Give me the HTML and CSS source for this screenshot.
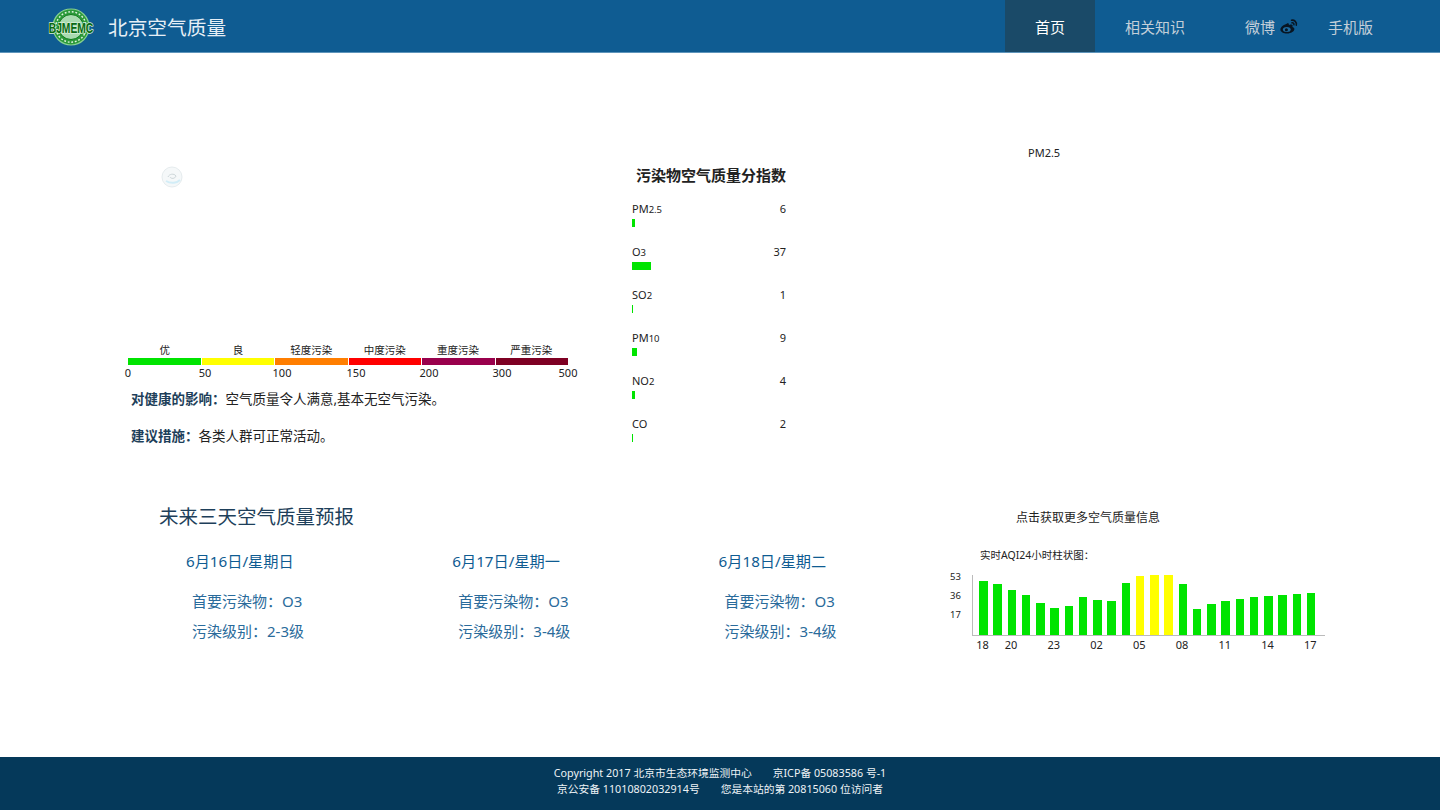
FILE: index.html
```html
<!DOCTYPE html>
<html lang="zh-CN">
<head>
<meta charset="utf-8">
<title>北京空气质量</title>
<link rel="stylesheet" href="styles.css">
</head>
<body>
<header class="topbar">
  <div class="brand">
    <svg class="logo" width="48" height="42" viewBox="0 0 48 42">
      <circle cx="24" cy="21" r="18" fill="#2c9a3a" stroke="#86d090" stroke-width="1.2"/>
      <circle cx="24" cy="21" r="15.200" fill="none" stroke="#e4f4e4" stroke-width="1.400" stroke-dasharray="1.800 1.800"/>
      <circle cx="24" cy="21" r="12.500" fill="#a9dab0" stroke="#0d7a1a" stroke-width="1"/>
      <text class="logo-text" transform="translate(24 27) scale(1 1.450)" text-anchor="middle">BJMEMC</text>
    </svg>
    <span class="brand-name">北京空气质量</span>
  </div>
  <nav class="nav">
    <a class="nav-item nav-active">首页</a>
    <a class="nav-item nav-wide">相关知识</a>
    <a class="nav-item nav-weibo">微博
      <svg class="weibo" width="18" height="15" viewBox="0 0 18 15">
        <path d="M6.800 4.800C3.800 5.800.4 8 .4 10.600c0 2.500 3.200 4 6.600 4 4.200 0 7.400-2.300 7.400-4.500 0-1.300-1.100-1.900-2-2.200.5-1.100.4-2.300-1.300-2.400-1 0-2.200.5-2.200.5.200-1.300-.6-2.100-2.100-1.400z" fill="#081522"/>
        <ellipse cx="6.800" cy="10.600" rx="3.900" ry="2.500" fill="#1d6a9f"/>
        <circle cx="6.400" cy="10.700" r="1.500" fill="#081522"/>
        <path d="M11.500 1.200c3-.5 5.500 2 4.800 5M12 3.800c1.300-.2 2.200.8 1.900 2" fill="none" stroke="#081522" stroke-width="1.500" stroke-linecap="round"/>
      </svg>
    </a>
    <a class="nav-item nav-mobile">手机版</a>
  </nav>
</header>

<main class="content">
  <section class="upper">
    <div class="aqi-col">
      <svg class="weather" width="24" height="22" viewBox="0 0 24 22">
        <circle cx="12" cy="11" r="10" fill="#f5f8f9" stroke="#e6ecee"/>
        <path d="M6 15c5 3 11 2 14-1" fill="none" stroke="#d2edf7" stroke-width="2"/>
        <path d="M8 11c1-3 6-4 8-1-1 3-5 3-6 1" fill="none" stroke="#cdd6d9" stroke-width="1"/>
      </svg>
      <div class="scale">
        <div class="scale-names">
          <span>优</span><span>良</span><span>轻度污染</span><span>中度污染</span><span>重度污染</span><span>严重污染</span>
        </div>
        <div class="scale-bar">
          <i class="lv1"></i><i class="lv2"></i><i class="lv3"></i><i class="lv4"></i><i class="lv5"></i><i class="lv6"></i>
        </div>
        <div class="scale-ticks">
          <span>0</span><span>50</span><span>100</span><span>150</span><span>200</span><span>300</span><span>500</span>
        </div>
      </div>
      <p class="advice"><b>对健康的影响：</b>空气质量令人满意,基本无空气污染。</p>
      <p class="advice advice-next"><b>建议措施：</b>各类人群可正常活动。</p>
    </div>

    <div class="index-col">
      <h3 class="index-title">污染物空气质量分指数</h3>
      <div class="pollutant"><div class="p-head"><span>PM<small>2.5</small></span><span>6</span></div><div class="p-bar" style="width:3px"></div></div>
      <div class="pollutant"><div class="p-head"><span>O<small>3</small></span><span>37</span></div><div class="p-bar" style="width:19px"></div></div>
      <div class="pollutant"><div class="p-head"><span>SO<small>2</small></span><span>1</span></div><div class="p-bar" style="width:1px"></div></div>
      <div class="pollutant"><div class="p-head"><span>PM<small>10</small></span><span>9</span></div><div class="p-bar" style="width:5px"></div></div>
      <div class="pollutant"><div class="p-head"><span>NO<small>2</small></span><span>4</span></div><div class="p-bar" style="width:3px"></div></div>
      <div class="pollutant"><div class="p-head"><span>CO</span><span>2</span></div><div class="p-bar" style="width:1px"></div></div>
    </div>

    <div class="pm-col">PM2.5</div>
  </section>

  <section class="lower">
    <div class="forecast">
      <h2 class="forecast-title">未来三天空气质量预报</h2>
      <div class="days">
        <div class="day">
          <div class="day-date">6月16日/星期日</div>
          <div class="day-line">首要污染物：O3</div>
          <div class="day-line">污染级别：2-3级</div>
        </div>
        <div class="day">
          <div class="day-date">6月17日/星期一</div>
          <div class="day-line">首要污染物：O3</div>
          <div class="day-line">污染级别：3-4级</div>
        </div>
        <div class="day">
          <div class="day-date">6月18日/星期二</div>
          <div class="day-line">首要污染物：O3</div>
          <div class="day-line">污染级别：3-4级</div>
        </div>
      </div>
    </div>

    <div class="chart-col">
      <div class="more">点击获取更多空气质量信息</div>
      <div class="chart-title">实时AQI24小时柱状图：</div>
      <div class="chart">
        <div class="y-labels"><span>53</span><span>36</span><span>17</span></div>
        <div class="plot">
          <div class="bars">
            <i style="height:54px"></i><i style="height:51px"></i><i style="height:45px"></i><i style="height:40px"></i><i style="height:32px"></i><i style="height:27px"></i><i style="height:29px"></i><i style="height:38px"></i><i style="height:35px"></i><i style="height:34px"></i><i style="height:52px"></i><i class="warn" style="height:59px"></i><i class="warn" style="height:60px"></i><i class="warn" style="height:60px"></i><i style="height:51px"></i><i style="height:26px"></i><i style="height:31px"></i><i style="height:34px"></i><i style="height:36px"></i><i style="height:38px"></i><i style="height:39px"></i><i style="height:40px"></i><i style="height:41px"></i><i style="height:42px"></i>
          </div>
          <div class="x-labels">
            <span>18</span><span></span><span>20</span><span></span><span></span><span>23</span><span></span><span></span><span>02</span><span></span><span></span><span>05</span><span></span><span></span><span>08</span><span></span><span></span><span>11</span><span></span><span></span><span>14</span><span></span><span></span><span>17</span>
          </div>
        </div>
      </div>
    </div>
  </section>
</main>

<footer class="footer">
  <div class="foot-line"><span>Copyright 2017 北京市生态环境监测中心</span><span>京ICP备 05083586 号-1</span></div>
  <div class="foot-line"><span>京公安备 11010802032914号</span><span>您是本站的第 20815060 位访问者</span></div>
</footer>
</body>
</html>
```
FILE: styles.css
```css
* { box-sizing: border-box; }
html, body { height: 100%; }
body {
  margin: 0;
  min-height: 810px;
  display: flex;
  flex-direction: column;
  background: #fff;
  color: #222;
  font-family: "Noto Sans", "Noto Sans CJK SC", sans-serif;
  font-size: 12px;
  overflow: hidden;
}

.topbar {
  height: 53px;
  flex: none;
  background: #0f5c92;
  border-bottom: 1px solid #5f95bb;
  display: flex;
  justify-content: space-between;
  padding: 0 67px 0 47px;
}
.brand { display: flex; align-items: center; gap: 13px; }
.logo { display: block; margin-top: 1px; }
.logo-text {
  font-family: "Liberation Sans", sans-serif;
  font-weight: 700;
  font-size: 10.300px;
  fill: #086a12;
  stroke: #d8f0d8;
  stroke-width: 1px;
  paint-order: stroke;
}
.brand-name { color: #e6eff6; font-size: 19.700px; }
.nav { display: flex; align-items: stretch; }
.nav-item {
  display: flex;
  align-items: center;
  justify-content: center;
  gap: 5px;
  color: #c3cfd9;
  font-size: 15px;
}
.nav-active { width: 90px; background: #1a4a68; color: #fff; }
.nav-wide { width: 120px; }
.nav-weibo { width: 113px; justify-content: flex-start; padding-left: 30px; }
.nav-mobile { width: 45px; }
.weibo { display: block; }

.content { flex: 1; display: flex; flex-direction: column; }

.upper { display: flex; height: 403px; padding-top: 92px; }
.aqi-col { width: 632px; padding-left: 128px; }
.weather { display: block; margin: 21px 0 0 32px; }
.scale { width: 440px; margin-top: 156px; }
.scale-names { display: flex; height: 14px; line-height: 12px; font-size: 10.500px; text-align: center; }
.scale-names span { flex: 1; }
.scale-bar { display: flex; gap: 1px; height: 7px; }
.scale-bar i { flex: 1; }
.lv1 { background: #00e400; }
.lv2 { background: #ffff00; }
.lv3 { background: #ff7e00; }
.lv4 { background: #ff0000; }
.lv5 { background: #99004c; }
.lv6 { background: #7e0023; }
.scale-ticks { display: flex; height: 15px; line-height: 15px; font-size: 11px; }
.scale-ticks span { flex: none; width: 0; display: flex; justify-content: center; }
.scale-ticks span:nth-child(1) { margin-right: 77px; }
.scale-ticks span:nth-child(2) { margin-right: 77px; }
.scale-ticks span:nth-child(3) { margin-right: 74px; }
.scale-ticks span:nth-child(4) { margin-right: 73px; }
.scale-ticks span:nth-child(5) { margin-right: 73px; }
.scale-ticks span:nth-child(6) { margin-right: 66px; }
.advice { margin: 9px 0 0 3px; font-size: 13.500px; line-height: 20px; color: #222; }
.advice-next { margin-top: 17px; }
.advice b { color: #1e3f5a; font-weight: 700; }

.index-col { width: 154px; padding-top: 20px; }
.index-title { margin: 0 0 17px 4px; font-size: 15px; line-height: 20px; font-weight: 700; white-space: nowrap; color: #222; }
.pollutant { height: 43px; }
.p-head { display: flex; justify-content: space-between; height: 17px; line-height: 13px; font-size: 11px; }
.p-head small { font-size: 9.500px; }
.p-bar { height: 8px; background: #00e400; }

.pm-col { flex: 1; padding-left: 242px; line-height: 15px; font-size: 11px; }

.lower { display: flex; height: 301px; }
.forecast { width: 925px; padding: 47px 0 0 159px; }
.forecast-title { margin: 0 0 19px; font-size: 19.500px; line-height: 28px; font-weight: 400; color: #1e3f5a; }
.days { display: flex; padding-left: 27px; }
.day { flex: none; width: 266.300px; color: #0f5c92; font-size: 15px; }
.day-date { line-height: 22px; margin-bottom: 14px; font-size: 15.200px; }
.day-line { margin-left: 6px; line-height: 30px; color: #2a6b9b; }

.chart-col { flex: 1; padding-top: 53px; }
.more { margin-left: 91px; line-height: 18px; font-size: 12px; }
.chart-title { margin: 20px 0 0 55px; line-height: 17px; font-size: 10.500px; }
.chart { display: flex; margin: 11px 0 0 25px; }
.y-labels { width: 22px; margin-top: -5px; display: flex; flex-direction: column; gap: 5px; font-size: 9.500px; line-height: 14px; }
.plot { width: 353px; }
.bars {
  height: 61px;
  display: flex;
  align-items: flex-end;
  gap: 5.760px;
  padding: 0 0 0 6px;
  border-left: 1px solid #bbb;
  border-bottom: 1px solid #bbb;
}
.bars i { flex: none; width: 8.500px; background: #00e400; }
.bars i.warn { background: #ffff00; }
.x-labels { display: grid; grid-template-columns: repeat(24, 14.260px); padding-left: 3.500px; font-size: 11px; line-height: 18px; }
.x-labels span { text-align: center; white-space: nowrap; }

.footer {
  height: 53px;
  flex: none;
  background: #05395a;
  color: #eef3f6;
  padding-top: 8px;
  font-size: 10.750px;
}
.foot-line { display: flex; justify-content: center; gap: 21px; line-height: 16px; }
```
